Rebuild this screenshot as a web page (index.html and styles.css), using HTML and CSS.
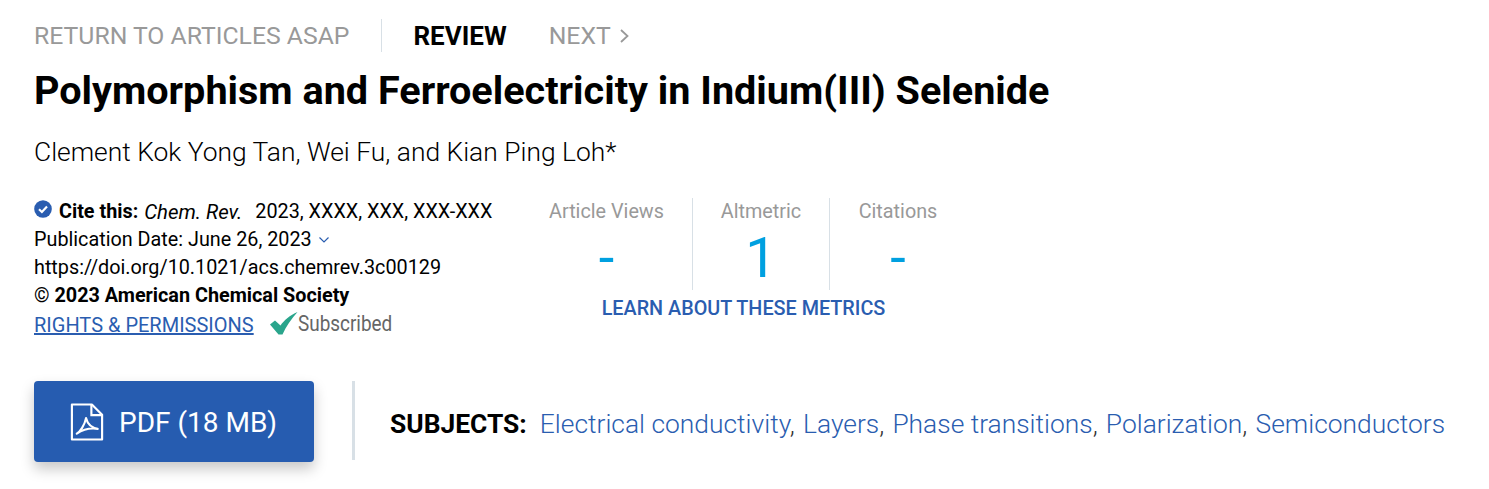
FILE: index.html
```html
<!DOCTYPE html>
<html lang="en">
<head>
<meta charset="utf-8">
<title>Polymorphism and Ferroelectricity in Indium(III) Selenide</title>
<link rel="stylesheet" href="styles.css">
</head>
<body>
<main class="page">
  <nav class="topnav">
    <a class="nav-return">RETURN TO ARTICLES ASAP</a>
    <span class="nav-type">REVIEW</span>
    <a class="nav-next">NEXT
      <svg class="next-icon" width="10" height="16" viewBox="0 0 10 16"><path d="M2 2 8.500 8l-6.500 6" fill="none" stroke="#999" stroke-width="1.800"/></svg>
    </a>
  </nav>
  <h1 class="title">Polymorphism and Ferroelectricity in Indium(III) Selenide</h1>
  <p class="authors">Clement Kok Yong Tan, Wei Fu, and Kian Ping Loh*</p>
  <section class="meta">
    <div class="cite">
      <div class="line line-cite">
        <svg class="cite-icon" width="18" height="18" viewBox="0 0 18 18"><circle cx="9" cy="9" r="8.800" fill="#2a5db0"/><path d="M5 9.300 7.900 12 13 6.600" fill="none" stroke="#fff" stroke-width="2.200"/></svg>
        <b>Cite this:</b> <i class="journal">Chem. Rev.</i> <span class="cite-ref">2023, XXXX, XXX, XXX-XXX</span>
      </div>
      <div class="line">Publication Date: June 26, 2023
        <svg class="date-icon" width="12" height="8" viewBox="0 0 12 8"><path d="M1.500 1.500 6 6l4.500-4.500" fill="none" stroke="#2a5db0" stroke-width="1.200"/></svg>
      </div>
      <div class="line">https://doi.org/10.1021/acs.chemrev.3c00129</div>
      <div class="line"><span class="copy">©</span> <b>2023 American Chemical Society</b></div>
      <div class="line line-rights">
        <a class="rights">RIGHTS &amp; PERMISSIONS</a>
        <svg class="check-icon" width="28" height="23" viewBox="0 0 28 23"><path d="M0 12.500 5 8.500 10.500 13.500C14 8.500 20 3 27.500 0 21.500 6.500 16 14.500 12.500 22.500H8.500Z" fill="#2aa58c"/></svg>
        <span class="subscribed">Subscribed</span>
      </div>
    </div>
    <div class="metrics">
      <div class="metric-row">
        <div class="metric m-views"><div class="m-label">Article Views</div><div class="m-value">-</div></div>
        <div class="metric m-alt"><div class="m-label">Altmetric</div><div class="m-value">1</div></div>
        <div class="metric m-cit"><div class="m-label">Citations</div><div class="m-value">-</div></div>
      </div>
      <a class="learn">LEARN ABOUT THESE METRICS</a>
    </div>
  </section>
  <section class="actions">
    <a class="pdf">
      <svg class="pdf-icon" width="34" height="38" viewBox="0 0 34 39">
        <path d="M1.500 1.500H22L32.500 12V37.500H1.500Z" fill="none" stroke="#fff" stroke-width="2.200" stroke-linejoin="round"/>
        <path d="M21.500 2V12.500H32" fill="none" stroke="#fff" stroke-width="2.200"/>
        <path d="M6.500 31.500C10 29.500 14.500 23 16 15.500 17.500 21.500 21.500 25.500 28 26.500 21 25.500 13 27 6.500 31.500Z" fill="none" stroke="#fff" stroke-width="2.200" stroke-linejoin="round"/>
      </svg>
      <span class="pdf-text">PDF (18 MB)</span>
    </a>
    <div class="subjects">
      <b class="sub-label">SUBJECTS:</b>
      <span class="sub-list"><a>Electrical conductivity</a><span class="sep">, </span><a>Layers</a><span class="sep">, </span><a>Phase transitions</a><span class="sep">, </span><a>Polarization</a><span class="sep">, </span><a>Semiconductors</a></span>
    </div>
  </section>
</main>
</body>
</html>
```
FILE: styles.css
```css
* { box-sizing: border-box; }
html, body { margin: 0; padding: 0; background: #fff; }
body { font-family: Roboto, "Liberation Sans", sans-serif; color: #000; }
.page { width: 1489px; height: 489px; padding: 19px 0 0 34px; overflow: hidden; }
.topnav { display: flex; align-items: center; height: 33px; font-size: 24.750px; white-space: nowrap; }
.nav-return { color: #999; padding-right: 32px; border-right: 1px solid #d8e0e6; height: 33px; line-height: 33px; }
.nav-type { font-weight: 700; font-size: 26px; margin-left: 31px; }
.nav-next { color: #999; margin-left: 42px; display: flex; align-items: center; gap: 8px; }
.title { margin: 13px 0 0; font-size: 39.600px; line-height: 52px; font-weight: 700; white-space: nowrap; }
.authors { margin: 18px 0 0; font-size: 26.400px; line-height: 34px; font-weight: 300; white-space: nowrap; }
.meta { display: flex; margin-top: 29px; height: 164px; }
.cite { width: 487px; font-size: 19.800px; }
.line { height: 28px; line-height: 28px; white-space: nowrap; }
.line-cite { display: flex; align-items: center; white-space: pre; }
.cite-icon { margin-right: 7px; margin-top: -6px; }
.journal { margin-left: 6px; font-size: 20.400px; }
.cite-ref { margin-left: 13px; }
.date-icon { vertical-align: 2px; margin-left: 1px; }
.line-rights { display: flex; align-items: center; height: 30px; }
.rights { font-size: 20px; color: #2a5db0; text-decoration: underline; }
.check-icon { margin-left: 16px; margin-top: -3px; }
.subscribed { font-size: 22px; color: #666; transform: scaleX(0.86); transform-origin: left; margin-top: -3px; }
.metrics { width: 445px; margin-top: 0; }
.metric-row { display: flex; height: 92px; }
.metric { text-align: center; }
.m-views { width: 172px; border-right: 1px solid #d8e0e6; }
.m-alt { width: 137px; border-right: 1px solid #d8e0e6; }
.m-cit { width: 136px; }
.m-label { font-size: 19.800px; line-height: 28px; color: #999; }
.m-value { font-size: 56px; line-height: 64px; color: #00a0e0; font-weight: 400; }
.learn { display: block; margin-top: 5px; text-align: center; font-size: 19.800px; line-height: 28px; font-weight: 500; color: #2a5db0; white-space: nowrap; }
.actions { display: flex; align-items: flex-start; margin-top: 19px; }
.pdf { display: flex; align-items: center; gap: 15px; width: 280px; height: 81px; padding-left: 36px; background: #265cb0; border-radius: 4px; color: #fff; font-size: 28px; box-shadow: 0 7px 14px rgba(0,0,0,.22); }
.pdf-text { margin-top: 2px; }
.subjects { margin-left: 38px; height: 79px; border-left: 3px solid #d8e0e6; padding: 6px 0 0 35px; display: flex; align-items: center; font-size: 26.400px; white-space: pre; }
.sub-label { font-size: 26.400px; margin-right: 13px; }
.sub-list { font-weight: 300; color: #333; }
.sub-list a { color: #2a5db0; }
.sep { margin-right: 1.700px; }
```
